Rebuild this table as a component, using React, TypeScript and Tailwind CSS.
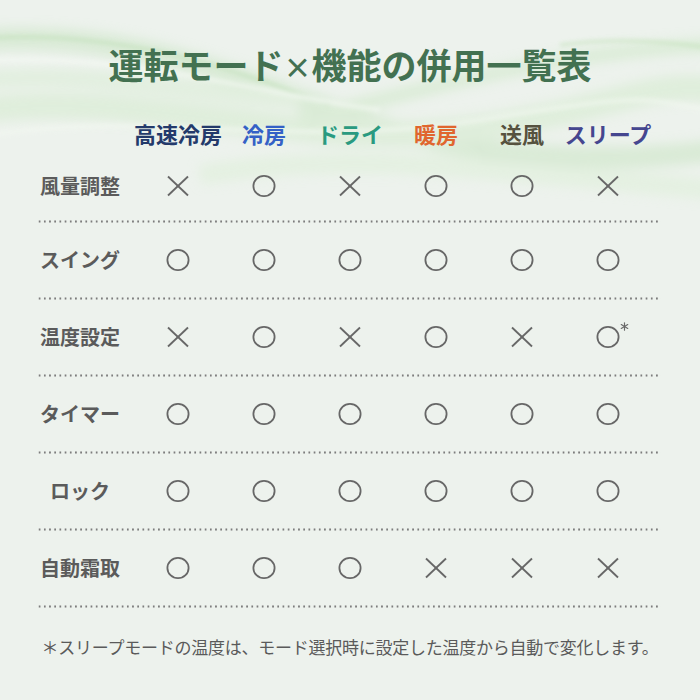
import React from 'react'

type Mark = 'o' | 'x' | 'o*'

const modes = [
  { name: '高速冷房', color: 'text-[#243a6b]' },
  { name: '冷房', color: 'text-[#3461c6]' },
  { name: 'ドライ', color: 'text-[#2a9a80]' },
  { name: '暖房', color: 'text-[#e0662e]' },
  { name: '送風', color: 'text-[#56523f]' },
  { name: 'スリープ', color: 'text-[#45468f]' },
]

const rows: { label: string; marks: Mark[]; h: string }[] = [
  { label: '風量調整', marks: ['x', 'o', 'x', 'o', 'o', 'x'], h: 'h-[68px]' },
  { label: 'スイング', marks: ['o', 'o', 'o', 'o', 'o', 'o'], h: 'h-[74px]' },
  { label: '温度設定', marks: ['x', 'o', 'x', 'o', 'x', 'o*'], h: 'h-[74px]' },
  { label: 'タイマー', marks: ['o', 'o', 'o', 'o', 'o', 'o'], h: 'h-[74px]' },
  { label: 'ロック', marks: ['o', 'o', 'o', 'o', 'o', 'o'], h: 'h-[74px]' },
  { label: '自動霜取', marks: ['o', 'o', 'o', 'x', 'x', 'x'], h: 'h-[74px]' },
]

function Symbol({ mark }: { mark: Mark }) {
  if (mark === 'x') {
    return (
      <svg width="24" height="24" viewBox="0 0 24 24" fill="none" stroke="#676767" strokeWidth="1.8">
        <line x1="2" y1="2.5" x2="22" y2="21.5" />
        <line x1="22" y1="2.5" x2="2" y2="21.5" />
      </svg>
    )
  }
  return (
    <span className="relative inline-flex">
      <svg width="24" height="24" viewBox="0 0 24 24" fill="none" stroke="#676767" strokeWidth="1.8">
        <ellipse cx="12" cy="12" rx="10.6" ry="10.2" />
      </svg>
      {mark === 'o*' && (
        <svg className="absolute left-[23.5px] top-[-3px]" width="9" height="9" viewBox="0 0 10 10" stroke="#6a6a6a" strokeWidth="1.3" strokeLinecap="round">
          <line x1="5" y1="0.8" x2="5" y2="9.2" />
          <line x1="1.4" y1="2.9" x2="8.6" y2="7.1" />
          <line x1="8.6" y1="2.9" x2="1.4" y2="7.1" />
        </svg>
      )}
    </span>
  )
}

function Dots() {
  return (
    <div className="ml-[37px] h-[3px] w-[624px] bg-[radial-gradient(circle,#7d7d7d_0.9px,transparent_1.3px)] bg-[length:5.2px_3px]" />
  )
}

function Waves() {
  return (
    <svg className="absolute left-0 top-0" width="700" height="240" viewBox="0 0 700 240" fill="none">
      <defs>
        <filter id="soft" x="-10%" y="-50%" width="120%" height="200%">
          <feGaussianBlur stdDeviation="6" />
        </filter>
        <filter id="soft2" x="-10%" y="-50%" width="120%" height="200%">
          <feGaussianBlur stdDeviation="2" />
        </filter>
      </defs>
      <g filter="url(#soft)" opacity="0.5">
        <path d="M-20 40 C 120 30, 220 70, 330 110 S 560 170, 720 150" stroke="#c6e3bf" strokeWidth="22" />
        <path d="M-20 110 C 150 90, 300 150, 460 130 S 640 80, 720 90" stroke="#d2eacb" strokeWidth="26" />
        <path d="M300 120 C 420 90, 560 50, 720 45" stroke="#c9e6c1" strokeWidth="14" />
        <path d="M-20 80 C 100 70, 200 95, 300 100" stroke="#d7ecd1" strokeWidth="18" />
        <path d="M200 175 C 350 150, 480 170, 720 190" stroke="#dcefd6" strokeWidth="20" />
      </g>
      <g filter="url(#soft2)" opacity="0.6">
        <path d="M-10 38 C 120 30, 230 68, 330 105" stroke="#bcdeb3" strokeWidth="3" />
        <path d="M560 45 C 610 38, 660 40, 710 48" stroke="#bfe0b5" strokeWidth="3" />
        <path d="M-10 60 C 150 55, 260 95, 380 110" stroke="#f5f9f4" strokeWidth="5" />
        <path d="M-10 135 C 150 110, 300 150, 480 120 S 640 100, 710 110" stroke="#f3f8f1" strokeWidth="5" />
      </g>
    </svg>
  )
}

export default function App() {
  return (
    <div
      className="relative h-[700px] w-[700px] overflow-hidden bg-[#edf2ed]"
      style={{ fontFamily: '"Noto Sans CJK JP", "Noto Sans", sans-serif' }}
    >
      <Waves />
      <div className="relative">
        <h1 className="pt-[46px] text-center text-[35px] font-bold leading-[35px] text-[#437151]">
          運転モード<span className="text-[28px]">×</span>機能の併用一覧表
        </h1>

        <div className="mt-[37px] flex pl-[36px]">
          <div className="mr-[11px] w-[88px]" />
          {modes.map((m) => (
            <div
              key={m.name}
              className={`flex w-[86px] justify-center whitespace-nowrap text-[22px] font-bold leading-[22px] ${m.color}`}
            >
              {m.name}
            </div>
          ))}
        </div>

        <div className="mt-[8px]">
          {rows.map((r) => (
            <div key={r.label}>
              <div className={`flex items-center pl-[36px] ${r.h}`}>
                <div className="mr-[11px] w-[88px] text-center text-[20px] font-bold text-[#5b5b5b]">{r.label}</div>
                {r.marks.map((m, i) => (
                  <div key={i} className="flex w-[86px] justify-center">
                    <Symbol mark={m} />
                  </div>
                ))}
              </div>
              <Dots />
            </div>
          ))}
        </div>

        <p className="mt-[30px] text-center text-[17px] leading-[17px] tracking-[-0.25px] text-[#5a5a5a]">
          ＊スリープモードの温度は、モード選択時に設定した温度から自動で変化します。
        </p>
      </div>
    </div>
  )
}
